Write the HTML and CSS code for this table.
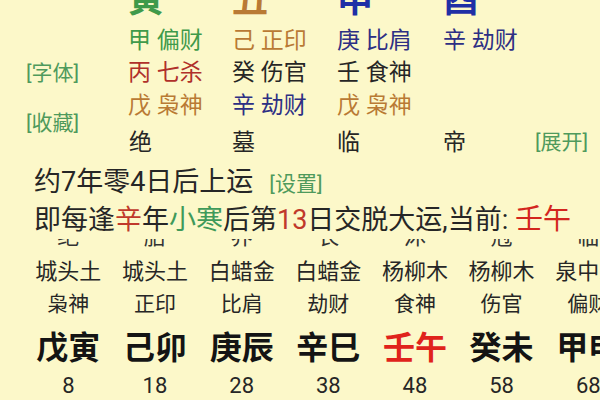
FILE: index.html
```html
<!DOCTYPE html>
<html lang="zh">
<head>
<meta charset="utf-8">
<link rel="stylesheet" href="styles.css">
</head>
<body>
<div class="page">
  <div class="pillars">
    <div class="big c-green col1">寅</div>
    <div class="big c-brown col2">丑</div>
    <div class="big c-blue col3">申</div>
    <div class="big c-blue col4">酉</div>

    <div class="cell c-green col1">甲 偏财</div>
    <div class="cell c-brown col2">己 正印</div>
    <div class="cell c-navy col3">庚 比肩</div>
    <div class="cell c-navy col4">辛 劫财</div>

    <div class="link label-font">[字体]</div>
    <div class="cell c-red col1">丙 七杀</div>
    <div class="cell c-dark col2">癸 伤官</div>
    <div class="cell c-dark col3">壬 食神</div>

    <div class="link label-fav">[收藏]</div>
    <div class="cell c-brown col1">戊 枭神</div>
    <div class="cell c-navy col2">辛 劫财</div>
    <div class="cell c-brown col3">戊 枭神</div>

    <div class="cell stage c-dark col1">绝</div>
    <div class="cell stage c-dark col2">墓</div>
    <div class="cell stage c-dark col3">临</div>
    <div class="cell stage c-dark col4">帝</div>
    <div class="link label-open">[展开]</div>
  </div>

  <div class="info">
    <div class="line">约7年零4日后上运<span class="link small">[设置]</span></div>
    <div class="line">即每逢<span class="red">辛</span>年<span class="green">小寒</span>后第<span class="red">13</span>日交脱大运,当前: <span class="now">壬午</span></div>
  </div>

  <div class="dayun">
    <div class="dy-inner">
      <div class="dy-row r-hidden">
        <span>绝</span><span>胎</span><span>养</span><span>长</span><span>沐</span><span>冠</span><span>临</span>
      </div>
      <div class="dy-row r-nayin">
        <span>城头土</span><span>城头土</span><span>白蜡金</span><span>白蜡金</span><span>杨柳木</span><span>杨柳木</span><span>泉中水</span>
      </div>
      <div class="dy-row r-god">
        <span>枭神</span><span>正印</span><span>比肩</span><span>劫财</span><span>食神</span><span>伤官</span><span>偏财</span>
      </div>
      <div class="dy-row r-gz">
        <span>戊寅</span><span>己卯</span><span>庚辰</span><span>辛巳</span><span class="cur">壬午</span><span>癸未</span><span>甲申</span>
      </div>
      <div class="dy-row r-age">
        <span>8</span><span>18</span><span>28</span><span>38</span><span>48</span><span>58</span><span>68</span>
      </div>
    </div>
  </div>
</div>
</body>
</html>
```

FILE: styles.css
```css
html, body {
  margin: 0;
  padding: 0;
  background: #fcf8c9;
  overflow: hidden;
}
body {
  width: 600px;
  height: 400px;
  font-family: Roboto, "Noto Sans CJK SC", sans-serif;
  color: #222;
}
.page {
  width: 600px;
  height: 400px;
  overflow: hidden;
}

/* top pillars grid */
.pillars {
  display: grid;
  grid-template-columns: 128px 104px 105px 106px 92px 65px;
  grid-template-rows: 48px 32px 33px 33px 40px;
  margin-top: -24px;
}
.big {
  grid-row: 1;
  font-size: 36px;
  line-height: 48px;
  font-weight: bold;
}
.cell {
  font-size: 23px;
  line-height: 33px;
  white-space: nowrap;
  align-self: center;
}
.col1 { grid-column: 2; }
.col2 { grid-column: 3; }
.col3 { grid-column: 4; }
.col4 { grid-column: 5; }
.pillars > .cell:nth-child(n+5):nth-child(-n+8) { grid-row: 2; }
.pillars > .cell:nth-child(n+10):nth-child(-n+12) { grid-row: 3; }
.pillars > .cell:nth-child(n+14):nth-child(-n+16) { grid-row: 4; }
.stage { grid-row: 5; }
.stage.col1 { padding-left: 1px; }

.link {
  color: #4f9a5c;
  font-size: 21px;
  line-height: 24px;
  white-space: nowrap;
}
.label-font {
  grid-column: 1;
  grid-row: 3;
  align-self: center;
  padding-left: 26px;
}
.label-fav {
  grid-column: 1;
  grid-row: 4 / span 2;
  align-self: center;
  padding-left: 26px;
  margin-bottom: 5px;
}
.label-open {
  grid-column: 6;
  grid-row: 5;
  align-self: center;
}

.c-green { color: #3f9a4a; }
.c-brown { color: #b97a34; }
.c-blue { color: #1f2fa6; }
.c-navy { color: #2d2f84; }
.c-red { color: #b0302a; }
.c-dark { color: #262626; }

/* info lines */
.info {
  padding: 2px 0 0 34px;
}
.line {
  font-size: 27px;
  line-height: 37px;
  white-space: nowrap;
  color: #262626;
}
.line .small {
  font-size: 21px;
  margin-left: 16px;
}
.red { color: #c0392b; }
.green { color: #3f9a5a; }
.now {
  color: #d3261e;
  font-size: 28px;
}

/* da yun table */
.dayun {
  height: 162px;
  overflow: hidden;
}
.dy-inner {
  margin-top: -17px;
  padding-left: 25px;
}
.dy-row {
  display: flex;
  white-space: nowrap;
}
.dy-row span {
  flex: 0 0 86.67px;
  text-align: center;
}
.r-hidden {
  font-size: 22px;
  line-height: 30px;
  margin-bottom: 3px;
  color: #333;
}
.r-nayin {
  font-size: 22px;
  line-height: 34px;
  color: #262626;
}
.r-god {
  font-size: 21px;
  line-height: 30px;
  color: #262626;
}
.r-gz {
  font-size: 32px;
  line-height: 58px;
  font-weight: bold;
  color: #141414;
}
.r-gz .cur { color: #e0231b; }
.r-age {
  font-size: 22px;
  line-height: 18px;
  color: #262626;
}
```
